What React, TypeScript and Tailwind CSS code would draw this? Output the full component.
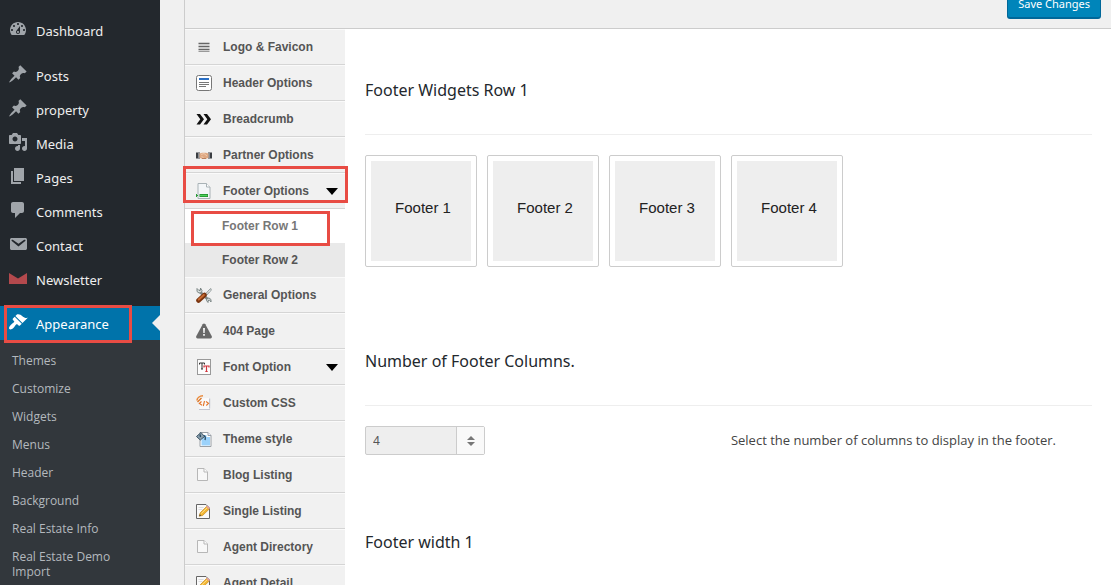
import type { ReactNode } from "react";

const adminPaths = {
  dashboard:
    "M3.76 16h12.48c1.1-1.37 1.76-3.11 1.76-5 0-4.42-3.58-8-8-8s-8 3.58-8 8c0 1.89.66 3.63 1.76 5zM10 4c.55 0 1 .45 1 1s-.45 1-1 1-1-.45-1-1 .45-1 1-1zM6 6c.55 0 1 .45 1 1s-.45 1-1 1-1-.45-1-1 .45-1 1-1zm8 0c.55 0 1 .45 1 1s-.45 1-1 1-1-.45-1-1 .45-1 1-1zm-5.37 5.55L12 7v6c0 1.1-.9 2-2 2s-2-.9-2-2c0-.57.24-1.08.63-1.45zM4 10c.55 0 1 .45 1 1s-.45 1-1 1-1-.45-1-1 .45-1 1-1zm12 0c.55 0 1 .45 1 1s-.45 1-1 1-1-.45-1-1 .45-1 1-1zm-5 3c0-.55-.45-1-1-1s-1 .45-1 1 .45 1 1 1 1-.45 1-1z",
  pin: "M10.44 3.02l1.82-1.82 6.36 6.35-1.83 1.82c-1.05-.68-2.48-.57-3.41.36l-.75.75c-.92.93-1.04 2.35-.35 3.41l-1.83 1.82-2.41-2.41-2.8 2.79c-.42.42-3.38 2.71-3.8 2.29s1.86-3.39 2.28-3.81l2.79-2.79L4.1 9.36l1.83-1.82c1.05.69 2.48.57 3.4-.36l.75-.75c.93-.92 1.05-2.35.36-3.41z",
  media:
    "M13 11V4c0-.55-.45-1-1-1h-1.67L9 1H5L3.67 3H2c-.55 0-1 .45-1 1v7c0 .55.45 1 1 1h10c.55 0 1-.45 1-1zM7 4.5c1.38 0 2.5 1.12 2.5 2.5S8.38 9.5 7 9.5 4.5 8.38 4.5 7 5.62 4.5 7 4.5zM14 6h5v10.5c0 1.38-1.12 2.5-2.5 2.5S14 17.88 14 16.5s1.12-2.5 2.5-2.5c.17 0 .34.02.5.05V9h-3V6zm-4 8.05V13h2v3.5c0 1.38-1.12 2.5-2.5 2.5S7 17.88 7 16.5 8.12 14 9.5 14c.17 0 .34.02.5.05z",
  page: "M6 15V2h10v13H6zm-1 1h8v2H3V5h2v11z",
  comments:
    "M5 2h9c1.1 0 2 .9 2 2v7c0 1.1-.9 2-2 2h-2l-5 5v-5H5c-1.1 0-2-.9-2-2V4c0-1.1.9-2 2-2z",
  email:
    "M3.87 4h13.25C18.37 4 19 4.59 19 5.79v8.42c0 1.19-.63 1.79-1.88 1.79H3.87c-1.25 0-1.88-.6-1.88-1.79V5.79c0-1.2.63-1.79 1.88-1.79zm6.62 8.6l6.74-5.53c.24-.2.43-.66.13-1.07-.29-.41-.82-.42-1.17-.17l-5.7 3.86L4.8 5.83c-.35-.25-.88-.24-1.17.17-.3.41-.11.87.13 1.07z",
  newsletter: "M1 5l9 5.5L19 5v11H1z",
  brush:
    "M14.48 11.06L7.41 3.99l1.5-1.5c.5-.56 2.3-.47 3.51.32 1.21.8 1.43 1.28 2.91 2.1 1.18.64 2.45 1.26 4.45.85zm-.71.71L6.7 4.7 4.93 6.47c-.39.39-.39 1.02 0 1.41l1.06 1.06c.39.39.39 1.03 0 1.42-.6.6-1.43 1.11-2.21 1.69-.35.26-.7.53-1.01.84C1.43 14.23.4 16.08 1.4 17.07c.99 1 2.84-.03 4.18-1.36.31-.31.58-.66.85-1.02.57-.78 1.08-1.61 1.69-2.21.39-.39 1.02-.39 1.41 0l1.06 1.06c.39.39 1.02.39 1.41 0z",
};

type AdminIcon = keyof typeof adminPaths;

const adminItems: { label: string; icon: AdminIcon; tint?: string }[] = [
  { label: "Posts", icon: "pin" },
  { label: "property", icon: "pin" },
  { label: "Media", icon: "media" },
  { label: "Pages", icon: "page" },
  { label: "Comments", icon: "comments" },
  { label: "Contact", icon: "email" },
  { label: "Newsletter", icon: "newsletter", tint: "text-[#b3494d]" },
];

const appearanceItems = [
  "Themes",
  "Customize",
  "Widgets",
  "Menus",
  "Header",
  "Background",
  "Real Estate Info",
  "Real Estate Demo Import",
];

function AdminLink({
  label,
  icon,
  tint = "text-[#a0a5aa]",
  row = "text-[#eee]",
  children,
}: {
  label: string;
  icon: AdminIcon;
  tint?: string;
  row?: string;
  children?: ReactNode;
}) {
  return (
    <a href="#" className={`relative flex h-[34px] items-center gap-2 pl-2 text-[13px] leading-5 ${row}`}>
      <svg viewBox="0 0 20 20" className={`mb-0.5 size-5 shrink-0 fill-current ${tint}`} aria-hidden="true">
        <path d={adminPaths[icon]} fillRule="evenodd" />
      </svg>
      <span className="pt-px">{label}</span>
      {children}
    </a>
  );
}

function AdminSidebar() {
  return (
    <nav className="w-40 shrink-0 bg-[#23282d] pt-[13px]" aria-label="Admin">
      <AdminLink label="Dashboard" icon="dashboard" />
      <div className="h-[11px]" />
      {adminItems.map((item) => (
        <AdminLink key={item.label} {...item} />
      ))}
      <div className="h-[10px]" />
      <AdminLink label="Appearance" icon="brush" tint="text-white" row="bg-[#0073aa] text-white">
        <span className="absolute top-[9px] right-0 border-8 border-l-0 border-transparent border-r-[#f0f0f0]" />
        <span className="absolute -top-px left-1 h-[38px] w-32 border-3 border-[#e84c44]" />
      </AdminLink>
      <ul className="flex h-screen flex-col gap-px bg-[#32373c] pt-[7px] font-['Open_Sans','Noto_Sans',sans-serif] text-[12px] leading-[15px] text-[#b4b9be]">
        {appearanceItems.map((label) => (
          <li key={label}>
            <a href="#" className="block py-1.5 pr-8 pl-3">
              {label}
            </a>
          </li>
        ))}
      </ul>
    </nav>
  );
}

function Icon({ children }: { children: ReactNode }) {
  return (
    <svg viewBox="0 0 16 16" className="size-4 shrink-0" aria-hidden="true">
      {children}
    </svg>
  );
}

const lines = (
  <Icon>
    <path d="M2.500 4.500h11M2.500 7.500h11M2.500 10.500h11" stroke="#666" strokeWidth="1.500" />
    <path d="M2.500 12.500h11" stroke="#999" />
  </Icon>
);

const headerDoc = (
  <Icon>
    <rect x=".5" y=".5" width="15" height="15" rx="2" fill="#fff" stroke="#777" />
    <path d="M3 4h10" stroke="#2a6fc4" strokeWidth="2" />
    <path d="M3 7.500h10M3 9.500h10M3 11.500h7" stroke="#777" />
  </Icon>
);

const chevrons = (
  <Icon>
    <path d="M.5 3H4l4 5.200-4 5.300H.5l3.800-5.300zM7.500 3H11l4 5.200-4 5.300H7.500l3.800-5.300z" fill="#111" />
  </Icon>
);

const handshake = (
  <Icon>
    <path d="M0 5.500h4v6H0zM12 5.500h4v6h-4z" fill="#3a3d42" />
    <path d="M2.500 6h1v5h-1zM12.500 6h1v5h-1z" fill="#d8dde2" />
    <path d="M3.500 6.500 6 5.800h4l2.500.7v4.300l-3 1.200H6.500l-3-1.200z" fill="#dfa983" />
    <path d="M5 7.500l3-1 3 2.500M5.500 9.500l2 1" stroke="#f0c8aa" fill="none" />
    <path d="M6 11.500h4" stroke="#b9805e" />
  </Icon>
);

const footerDoc = (
  <Icon>
    <path d="M2 .5h8.500L14 4v11.500H2z" fill="#f3f6f8" stroke="#a9b2b6" />
    <path d="M10.500.5V4H14" fill="#fff" stroke="#a9b2b6" />
    <path d="M3.500 12.500h8.500" stroke="#1d8a2a" strokeWidth="3" />
    <path d="M4 12.500h7.500" stroke="#4fd05c" strokeWidth="1.500" />
    <path d="M.5 11v3M2 12.500H1" stroke="#2a9b38" />
  </Icon>
);

const tools = (
  <Icon>
    <path d="M2.500 3.500 13 13.500" stroke="#7d8889" strokeWidth="2.600" />
    <path d="M1 1.500v3l2 1.500 2.500-.5.5-2L4.500 1v2.200L3 3.500zM15 15v-2.500l-2-1.500-2 .5-.5 2 1.500 2v-2l1.500-.5z" fill="#d9e0df" stroke="#75807f" strokeWidth=".9" />
    <path d="m9 7.500 4-4.500 1.800-1.500.5 1.800L13.500 5l-3 3.500" fill="#dfe3e3" stroke="#8b9595" strokeWidth=".9" />
    <path d="m2.500 13.500 6-5.500" stroke="#7a3510" strokeWidth="4.600" strokeLinecap="round" />
    <path d="m2.800 12.600 5-4.600" stroke="#c76a32" strokeWidth="2" strokeLinecap="round" />
  </Icon>
);

const warning = (
  <Icon>
    <path d="M6.700 1.200Q8-.4 9.300 1.200l6.500 12Q16.200 15.300 14.500 15.500h-13Q-.2 15.300.2 13.200z" fill="#696969" />
    <path d="M7 5h2l-.3 5H7.300zM7.100 11h1.800v1.800H7.100z" fill="#f1f1f1" />
  </Icon>
);

const fontLetters = (
  <Icon>
    <rect x="1.500" y=".5" width="13" height="15" fill="#fdfdfd" stroke="#999" />
    <path d="M3.500 5.500V4h5v1.500M6 4v6M5 10h2" fill="none" stroke="#333" />
    <path d="M8 8.500V7h5v1.500M10.500 7v5.500M9.300 12.500h2.400" fill="none" stroke="#d0343c" strokeWidth="1.200" />
  </Icon>
);

const customCode = (
  <Icon>
    <path d="M3.500 3.500 13.500 3l.8 10.500-1.500 1.500H3.500z" fill="#fafafb" />
    <path d="M13.600 3.500v10M3 14.500h11" stroke="#c4c6d0" strokeWidth="1.200" />
    <path d="M1 5.500C1 3 3.500 1 7 .8" stroke="#e98a3c" strokeWidth="1.600" fill="none" />
    <path d="M1.500 7 5.500 3" stroke="#d97324" strokeWidth="1.300" />
    <path d="M5.500 6.500 3.300 8.500l2.800 1.800M10 6.500l2.500 1.800-2.200 2.200M8.500 6 7.300 11" stroke="#e5752a" strokeWidth="1.100" fill="none" />
  </Icon>
);

const paint = (
  <Icon>
    <path d="M4 1.500h8l3 3v11H4z" fill="#fff" stroke="#9aa0a6" />
    <path d="M5.500 4h5v2H14v8.500H5.500z" fill="#9bd2fb" />
    <path d="M12 1.500v3h3" fill="#eef" stroke="#9aa0a6" />
    <path d="M.5 5.500 5 1.500l3.500 4L4.300 9z" fill="#8ba0ae" stroke="#3e5566" />
    <path d="M4 3.500 4.500 6M8 4.500c1.500.5 1.500 2.500 1 4.500" stroke="#26455c" strokeWidth="1.300" fill="none" />
  </Icon>
);

const blankDoc = (
  <Icon>
    <path d="M1.500 1.500H8L11.500 5v8.500h-10z" fill="#f8f8f8" stroke="#b7b7b7" />
    <path d="M8 1.500V5h3.500" fill="#fff" stroke="#b7b7b7" />
  </Icon>
);

const editDoc = (
  <Icon>
    <path d="M.5 1.500H10L13.500 5v10.500H.5z" fill="#fafafa" stroke="#666" />
    <path d="M2.500 4.500h5M2.500 6.500h4" stroke="#ddd" />
    <path d="m3.200 13.200 1-3.400 6.600-6.500 2.700 2.500-6.800 6.600z" fill="#f2b632" stroke="#c98a1c" strokeWidth=".7" />
    <path d="m5.300 10.500 6.300-6.200" stroke="#ffe08a" />
    <path d="m10.300 3.800 1.200-1.100 2.500 2.400-1.200 1.200z" fill="#e3a0a0" />
    <path d="m3.200 13.200.6-2 1.500 1.400z" fill="#444" />
  </Icon>
);

type OptionItem = { label: string; icon: ReactNode; expands?: boolean; children?: string[] };

const options: OptionItem[] = [
  { label: "Logo & Favicon", icon: lines },
  { label: "Header Options", icon: headerDoc },
  { label: "Breadcrumb", icon: chevrons },
  { label: "Partner Options", icon: handshake },
  { label: "Footer Options", icon: footerDoc, expands: true, children: ["Footer Row 1", "Footer Row 2"] },
  { label: "General Options", icon: tools },
  { label: "404 Page", icon: warning },
  { label: "Font Option", icon: fontLetters, expands: true },
  { label: "Custom CSS", icon: customCode },
  { label: "Theme style", icon: paint },
  { label: "Blog Listing", icon: blankDoc },
  { label: "Single Listing", icon: editDoc },
  { label: "Agent Directory", icon: blankDoc },
  { label: "Agent Detail", icon: editDoc },
];

function OptionsMenu() {
  return (
    <ul className="w-40 shrink-0 bg-[#f1f1f1] font-['Liberation_Sans',Arial,sans-serif] text-xs font-bold text-[#555]">
      {options.map(({ label, icon, expands, children }) => (
        <li key={label}>
          <a
            href="#"
            className="relative flex h-9 items-center border-t border-b border-t-[#fafafa] border-b-[#d5d5d5] pr-[7px] pl-[11px]"
          >
            {icon}
            <span className="ml-[11px] flex-1">{label}</span>
            {expands && (
              <svg viewBox="0 0 12 7" className="h-[7px] w-3" aria-hidden="true">
                <path d="M0 0h12L6 7z" fill="#000" />
              </svg>
            )}
            {children && (
              <span className="absolute -top-2 -left-0.5 z-10 h-[37px] w-[165px] border-3 border-[#e84c44]" />
            )}
          </a>
          {children && (
            <ul>
              {children.map((child, i) => (
                <li key={child}>
                  <a
                    href="#"
                    className={`relative flex h-[34px] items-center pl-[37px] ${
                      i === 0 ? "bg-white text-[#777]" : "bg-[#e9e9e9]"
                    }`}
                  >
                    {child}
                    {i === 0 && (
                      <span className="absolute top-0.5 left-1.5 z-10 h-[35px] w-[139px] border-3 border-[#e84c44]" />
                    )}
                  </a>
                </li>
              ))}
            </ul>
          )}
        </li>
      ))}
    </ul>
  );
}

function Heading({ children }: { children: ReactNode }) {
  return <h3 className="border-b border-[#eee] pb-8 text-base leading-6 text-[#23282d]">{children}</h3>;
}

function Content() {
  return (
    <main className="min-w-0 flex-1 pt-[49px] pr-[19px] pl-5">
      <section>
        <Heading>Footer Widgets Row 1</Heading>
        <div className="mt-5 flex gap-2.5 font-['Liberation_Sans',Arial,sans-serif] text-[15px] text-[#222]">
          {[1, 2, 3, 4].map((n) => (
            <div key={n} className="size-28 rounded-xs border border-[#ccc] p-[5px]">
              <div className="flex h-full items-center justify-center bg-[#eee] pb-1.5 pl-1">Footer {n}</div>
            </div>
          ))}
        </div>
      </section>
      <section className="mt-[82px]">
        <Heading>
          <label htmlFor="columns">Number of Footer Columns.</label>
        </Heading>
        <div className="mt-5 flex items-center justify-between pr-9 text-[#444]">
          <div className="relative">
            <select
              id="columns"
              defaultValue="4"
              className="h-[29px] w-[120px] appearance-none rounded-xs border border-[#ccc] bg-[#eee] px-[7px] text-xs text-[#555]"
            >
              <option>1</option>
              <option>2</option>
              <option>3</option>
              <option>4</option>
            </select>
            <span className="pointer-events-none absolute inset-y-px right-px flex w-7 items-center justify-center border-l border-[#ccc] bg-[#f9f9f9]">
              <svg viewBox="0 0 8 10" className="h-2.5 w-2" aria-hidden="true">
                <path d="M0 4h8L4 0zM0 6h8l-4 4z" fill="#777" />
              </svg>
            </span>
          </div>
          <p className="pt-px font-['Open_Sans','Noto_Sans',sans-serif] text-[13px]">
            Select the number of columns to display in the footer.
          </p>
        </div>
      </section>
      <section className="mt-[75px]">
        <Heading>Footer width 1</Heading>
      </section>
    </main>
  );
}

export default function App() {
  return (
    <div className="flex h-screen overflow-hidden bg-[#f0f0f0] font-['Noto_Sans','Open_Sans',sans-serif]">
      <AdminSidebar />
      <div className="ml-6 min-w-0 flex-1 border-l border-[#ccc]">
        <header className="flex h-[29px] items-end justify-end border-b border-[#ccc] pr-2.5 pb-[9px]">
          <button
            type="button"
            className="h-7 shrink-0 rounded-[3px] border border-b-2 border-[#006799] bg-[#0085ba] px-2.5 pb-0.5 text-[11px] leading-5 text-white"
          >
            Save Changes
          </button>
        </header>
        <div className="flex bg-white">
          <OptionsMenu />
          <Content />
        </div>
      </div>
    </div>
  );
}
